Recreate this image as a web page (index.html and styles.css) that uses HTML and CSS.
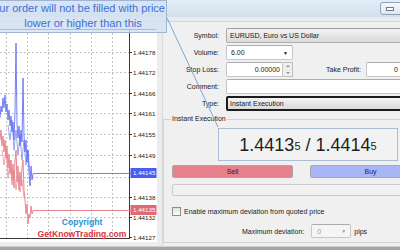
FILE: index.html
```html
<!DOCTYPE html>
<html>
<head>
<meta charset="utf-8">
<link rel="stylesheet" href="styles.css">
</head>
<body>
<div class="window">
  <div class="titlebar"><span class="min-btn"><span class="min-glyph"></span></span></div>
  <div class="strip"></div>
  <div class="main">
    <div class="chart-pane">
      <svg class="chart" width="157" height="213" viewBox="0 0 157 213">
        <g transform="translate(0,-29)">
          <rect x="0" y="29" width="157" height="213" fill="#ffffff"/>
          <g stroke="#c4c4c4" stroke-width="1" stroke-dasharray="2 2" fill="none">
            <line x1="0" y1="52.5" x2="129" y2="52.5"/>
            <line x1="0" y1="72.5" x2="129" y2="72.5"/>
            <line x1="0" y1="93.5" x2="129" y2="93.5"/>
            <line x1="0" y1="113.5" x2="129" y2="113.5"/>
            <line x1="0" y1="134.5" x2="129" y2="134.5"/>
            <line x1="0" y1="155.5" x2="129" y2="155.5"/>
            <line x1="0" y1="177.5" x2="129" y2="177.5"/>
            <line x1="0" y1="197.5" x2="129" y2="197.5"/>
            <line x1="0" y1="217.5" x2="129" y2="217.5"/>
            <line x1="6.5" y1="33" x2="6.5" y2="238"/>
            <line x1="27.5" y1="33" x2="27.5" y2="238"/>
            <line x1="48.5" y1="33" x2="48.5" y2="238"/>
            <line x1="70.5" y1="33" x2="70.5" y2="238"/>
            <line x1="91.5" y1="33" x2="91.5" y2="238"/>
            <line x1="112.5" y1="33" x2="112.5" y2="238"/>
          </g>
          <g stroke="#3a3a3a" stroke-width="1" fill="none">
            <line x1="0" y1="29.5" x2="156" y2="29.5"/>
            <line x1="129.5" y1="30" x2="129.5" y2="239"/>
            <line x1="0" y1="238.5" x2="130" y2="238.5"/>
            <line x1="130" y1="52.5" x2="132" y2="52.5"/>
            <line x1="130" y1="72.5" x2="132" y2="72.5"/>
            <line x1="130" y1="93.5" x2="132" y2="93.5"/>
            <line x1="130" y1="113.5" x2="132" y2="113.5"/>
            <line x1="130" y1="134.5" x2="132" y2="134.5"/>
            <line x1="130" y1="155.5" x2="132" y2="155.5"/>
            <line x1="130" y1="197.5" x2="132" y2="197.5"/>
            <line x1="130" y1="217.5" x2="132" y2="217.5"/>
            <line x1="130" y1="237.5" x2="132" y2="237.5"/>
          </g>
          <polyline fill="none" stroke="#e8868f" stroke-width="1" points="0,140 1,130 2,146 3,136 4,152 5,140 6,158 7,146 8,168 9,154 10,174 11,160 12,180 13,164 14,188 15,160 16,150 17,182 18,166 19,190 20,172 21,186 22,168 23,160 24,190 25,200 26,214 27,204 28,224 29,214 30,218 31,206 32,214 33,210.5 131,210.5"/>
          <polyline fill="none" stroke="#e8868f" stroke-width="1" stroke-opacity="0.7" points="2,150 4,165 6,150 8,178 10,160 12,185 14,170 16,190 18,175 20,192 22,180 24,198"/>
          <polyline fill="none" stroke="#5d6af2" stroke-width="1" stroke-opacity="0.85" points="0,118 1,106 2,112 3,98 4,108 5,95 6,112 7,104 8,120 9,110 10,126 11,116 12,132 13,122 14,140 15,112 16,43 17,124 18,138 19,126 20,146 21,130 22,142 23,78 24,136 25,152 26,140 27,162 28,150 29,172 30,186 31,166 32,180 33,173.5 131,173.5"/>
          <polyline fill="none" stroke="#5d6af2" stroke-width="1" stroke-opacity="0.6" points="8,125 10,140 12,120 14,150 16,130 18,155 20,135 22,160 24,140 26,165 28,150 30,175"/>
          <g class="axis-text">
            <text x="133" y="54.5">1.44178</text>
            <text x="133" y="74.5">1.44172</text>
            <text x="133" y="95.5">1.44166</text>
            <text x="133" y="115.5">1.44161</text>
            <text x="133" y="136.5">1.44155</text>
            <text x="133" y="157.5">1.44149</text>
            <text x="133" y="199.5">1.44138</text>
            <text x="133" y="219.5">1.44132</text>
            <text x="133" y="239.5">1.44127</text>
          </g>
          <rect x="130.5" y="168" width="26" height="10" fill="#4a5cf2"/>
          <text class="axis-text tag" x="133" y="175.2">1.44145</text>
          <rect x="130.5" y="205" width="26" height="10" fill="#e26872"/>
          <text class="axis-text tag" x="133" y="212.2">1.44135</text>
          <text class="copy1" x="82" y="225" text-anchor="middle">Copyright</text>
          <text class="copy2" x="82" y="237" text-anchor="middle">GetKnowTrading.com</text>
        </g>
      </svg>
    </div>
    <div class="dialog">
      <div class="row">
        <span class="lbl">Symbol:</span>
        <span class="select wide">EURUSD, Euro vs US Dollar</span>
      </div>
      <div class="row">
        <span class="lbl">Volume:</span>
        <span class="input vol">6.00<span class="arrow">&#9660;</span></span>
      </div>
      <div class="row">
        <span class="lbl">Stop Loss:</span>
        <span class="input sl">0.00000</span>
        <span class="spin"><span class="up"></span><span class="down"></span></span>
        <span class="lbl2">Take Profit:</span>
        <span class="input tp">0</span>
      </div>
      <div class="row">
        <span class="lbl">Comment:</span>
        <span class="input wide"></span>
      </div>
      <div class="row">
        <span class="lbl">Type:</span>
        <span class="select wide focus">Instant Execution</span>
      </div>
      <fieldset class="group">
        <legend>Instant Execution</legend>
        <div class="price">1.4413<small>5</small> / 1.4414<small>5</small></div>
        <div class="buttons">
          <span class="btn sell">Sell</span>
          <span class="btn buy">Buy</span>
        </div>
        <div class="blank"></div>
        <div class="check-row"><span class="checkbox"></span><span>Enable maximum deviation from quoted price</span></div>
        <div class="dev-row">
          <span>Maximum deviation:</span>
          <span class="input dis">0<span class="arrow grey">&#9660;</span></span>
          <span>pips</span>
        </div>
      </fieldset>
    </div>
  </div>
  <div class="statusbar"></div>
</div>
<div class="tooltip">
  <div class="tl1">Your order will not be filled with price</div>
  <div class="tl2">lower or higher than this</div>
</div>
<svg class="pointer" width="400" height="250" viewBox="0 0 400 250"><line x1="167" y1="18" x2="218" y2="127" stroke="#7ea8da" stroke-width="1"/></svg>
</body>
</html>
```
FILE: styles.css
```css
html, body {
  margin: 0;
  padding: 0;
}
body {
  width: 400px;
  height: 250px;
  overflow: hidden;
  position: relative;
  background: #f0f0f0;
  font-family: "Liberation Sans", Arial, sans-serif;
  font-size: 7px;
  color: #202020;
}
.window {
  width: 400px;
  height: 250px;
  display: flex;
  flex-direction: column;
  overflow: hidden;
}
.titlebar {
  height: 17px;
  flex: none;
  background: linear-gradient(#e4edf7, #d3dfed);
  display: flex;
  justify-content: flex-end;
  align-items: flex-start;
}
.min-btn {
  width: 21px;
  height: 11px;
  margin-top: 2px;
  margin-right: -3px;
  border: 1px solid #8fa2b8;
  border-radius: 3px;
  background: linear-gradient(#f6f9fc, #dde6f0);
  display: flex;
  justify-content: center;
  align-items: center;
}
.min-glyph {
  width: 6px;
  height: 2px;
  border: 1px solid #6c7c8e;
  background: #fff;
  margin-left: -4px;
}
.strip {
  height: 4px;
  flex: none;
  background: #e9ebee;
  border-bottom: 1px solid #d6d6d6;
}
.main {
  height: 224px;
  flex: none;
  display: grid;
  grid-template-columns: 163px 290px;
}
.chart-pane {
  background: #ececec;
  border-right: 1px solid #dadada;
  padding-top: 7px;
  box-sizing: border-box;
}
.chart {
  display: block;
}
.axis-text {
  font-family: "Liberation Sans", Arial, sans-serif;
  font-size: 6.2px;
  fill: #202020;
}
.axis-text.tag {
  fill: #ffffff;
}
.copy1 {
  font-family: "Liberation Sans", Arial, sans-serif;
  font-weight: bold;
  font-size: 8.6px;
  fill: #2b90d2;
}
.copy2 {
  font-family: "Liberation Sans", Arial, sans-serif;
  font-weight: bold;
  font-size: 8.6px;
  fill: #e0303e;
}
.dialog {
  padding-top: 6px;
  display: flex;
  flex-direction: column;
}
.row {
  display: flex;
  align-items: center;
  height: 15px;
  margin-bottom: 2px;
}
.lbl {
  width: 56px;
  text-align: right;
  margin-right: 7px;
  flex: none;
}
.lbl2 {
  margin-left: 33px;
  margin-right: 5px;
  flex: none;
}
.select, .input {
  box-sizing: border-box;
  height: 15px;
  display: flex;
  align-items: center;
  flex: none;
  border: 1px solid #acacac;
  border-top-color: #9c9c9c;
  border-radius: 2px;
  padding: 0 3px;
}
.select {
  background: linear-gradient(#f3f3f3, #dadada);
}
.input {
  background: #ffffff;
  border-color: #c6c6c6;
  border-top-color: #acacac;
}
.wide {
  width: 200px;
}
.select.focus {
  border: 2px solid #1c1c1c;
  padding-left: 2px;
}
.vol {
  width: 67px;
  justify-content: space-between;
  padding-left: 4px;
}
.arrow {
  font-size: 5px;
  color: #111;
  margin-right: 1px;
}
.arrow.grey {
  color: #9a9a9a;
}
.sl {
  width: 57px;
  justify-content: flex-end;
  padding-right: 2px;
  border-radius: 2px 0 0 2px;
}
.spin {
  width: 10px;
  height: 15px;
  box-sizing: border-box;
  border: 1px solid #c0c0c0;
  border-left: none;
  background: #eeeeee;
  display: flex;
  flex-direction: column;
  justify-content: space-around;
  align-items: center;
  flex: none;
}
.spin .up, .spin .down {
  width: 0;
  height: 0;
  border-left: 2px solid transparent;
  border-right: 2px solid transparent;
}
.spin .up {
  border-bottom: 2px solid #909090;
}
.spin .down {
  border-top: 2px solid #909090;
}
.tp {
  width: 36px;
  justify-content: flex-end;
  padding-right: 3px;
}
.group {
  margin: 2px 0 0 0;
  padding: 5px 0 4px 8px;
  border: 1px solid #d2d2d2;
  border-right: none;
  min-width: 0;
}
.group legend {
  padding: 0 1px;
  margin-left: -1px;
  line-height: 8px;
  font-size: 7px;
}
.price {
  width: 180px;
  height: 33px;
  box-sizing: border-box;
  margin-left: 46px;
  border: 1px solid #a9bed5;
  background: #f2f2f2;
  display: flex;
  align-items: center;
  justify-content: center;
  font-size: 18px;
  color: #1e1e1e;
  padding-top: 2px;
  white-space: pre;
}
.price small {
  font-size: 11px;
}
.buttons {
  display: flex;
  gap: 17px;
  margin-top: 4px;
}
.btn {
  width: 121px;
  height: 13px;
  box-sizing: border-box;
  border: 1px solid #a8a8a8;
  border-radius: 2px;
  display: flex;
  align-items: center;
  justify-content: center;
  font-size: 7px;
}
.sell {
  background: #e6808a;
  color: #3a1616;
}
.buy {
  background: #a8b6f7;
  color: #1c2650;
}
.blank {
  width: 272px;
  height: 12px;
  box-sizing: border-box;
  margin-top: 6px;
  border: 1px solid #cbcbcb;
  border-radius: 2px;
  background: #f1f1f1;
}
.check-row {
  display: flex;
  align-items: center;
  height: 11px;
  margin-top: 10px;
  gap: 3px;
}
.checkbox {
  width: 9px;
  height: 9px;
  box-sizing: border-box;
  border: 1px solid #8e8e8e;
  background: linear-gradient(#e2e2e2, #fafafa);
}
.dev-row {
  display: flex;
  align-items: center;
  height: 14px;
  margin-top: 7px;
  padding-left: 70px;
  gap: 7px;
}
.input.dis {
  width: 40px;
  height: 14px;
  background: #f5f5f5;
  color: #a0a0a0;
  justify-content: space-between;
  padding-left: 5px;
  margin-right: -4px;
}
.statusbar {
  flex: 1;
  border-top: 1px solid #cfcfcf;
  background: #a6a6a6;
}
.tooltip {
  position: absolute;
  left: -40px;
  top: 0;
  width: 207px;
  height: 33px;
  box-sizing: border-box;
  background: rgba(212, 226, 243, 0.78);
  border: 1px solid #9fb5d2;
  color: #3c6fd6;
  font-family: "Liberation Sans", Arial, sans-serif;
  font-size: 11px;
  line-height: 15px;
}
.tl1 {
  text-align: right;
  padding-right: 1px;
  white-space: nowrap;
}
.tl2 {
  text-align: center;
  padding-left: 39px;
}
.pointer {
  position: absolute;
  left: 0;
  top: 0;
  pointer-events: none;
}
```
